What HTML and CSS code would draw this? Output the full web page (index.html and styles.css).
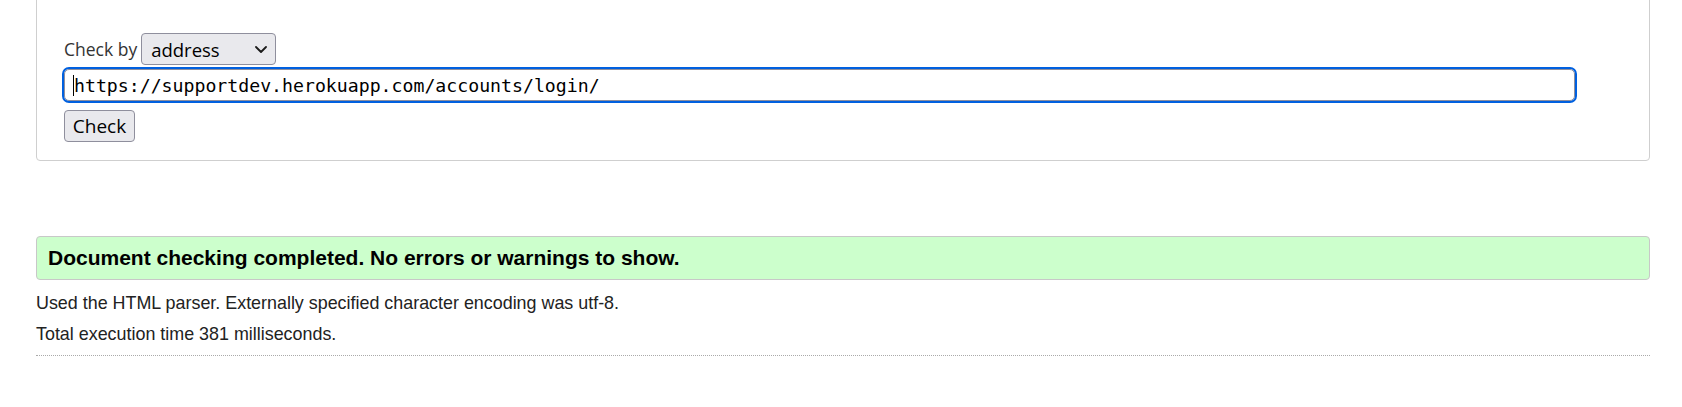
FILE: index.html
```html
<!DOCTYPE html>
<html lang="en">
<head>
<meta charset="utf-8">
<title>Nu Html Checker</title>
<link rel="stylesheet" href="styles.css">
</head>
<body>
<div class="page">
  <form class="checker">
    <div class="row">
      <label class="by-label" for="docselect">Check by</label>
      <span class="select-wrap">
        <select id="docselect" class="doc-select">
          <option>address</option>
        </select>
        <svg class="chevron" width="12" height="7" viewBox="0 0 12 7"><path d="M1 1 L6 6 L11 1" fill="none" stroke="#1b1b1b" stroke-width="1.8" stroke-linecap="round" stroke-linejoin="round"/></svg>
      </span>
    </div>
    <div class="url-wrap">
      <input class="url" type="url" value="https://supportdev.herokuapp.com/accounts/login/">
      <span class="caret"></span>
    </div>
    <button class="submit" type="button">Check</button>
  </form>

  <p class="success">Document checking completed. No errors or warnings to show.</p>
  <p class="details first">Used the HTML parser. Externally specified character encoding was utf-8.</p>
  <p class="details">Total execution time 381 milliseconds.</p>
  <hr class="sep">
</div>
</body>
</html>
```

FILE: styles.css
```css
html, body {
  margin: 0;
  background: #fff;
}
body {
  font-family: "Liberation Sans", Arial, sans-serif;
  color: #222;
}
.page {
  padding: 0 32px 0 36px;
}
.checker {
  margin: -20px 0 0 0;
  border: 1px solid #cfcfcf;
  border-radius: 4px;
  padding: 52px 0 18px 27px;
  display: flex;
  flex-direction: column;
  align-items: flex-start;
}
.row {
  display: flex;
  align-items: center;
  gap: 4px;
  height: 32px;
}
.by-label {
  font-family: "Open Sans", "Noto Sans", sans-serif;
  font-size: 17.5px;
  color: #333;
}
.select-wrap {
  position: relative;
  display: inline-flex;
}
.doc-select {
  -webkit-appearance: none;
  appearance: none;
  box-sizing: border-box;
  width: 135px;
  height: 32px;
  margin: 0;
  padding: 0 0 0 9px;
  border: 1px solid #8f8f9d;
  border-radius: 4px;
  background: #e9e9ed;
  color: #000;
  font-family: "Open Sans", "Noto Sans", sans-serif;
  font-size: 18.5px;
}
.chevron {
  position: absolute;
  left: 114px;
  top: 13px;
  pointer-events: none;
}
.url-wrap {
  position: relative;
  margin-top: 4px;
  width: 1511px;
}
.url {
  display: block;
  box-sizing: border-box;
  width: 100%;
  height: 32px;
  margin: 0;
  padding: 0 8px 0 9px;
  border: 1px solid #8f8f9d;
  border-radius: 5px;
  outline: 2px solid #0060df;
  outline-offset: 0;
  background: #fff;
  color: #000;
  font-family: "DejaVu Sans Mono", monospace;
  font-size: 18.2px;
}
.caret {
  position: absolute;
  left: 9px;
  top: 6px;
  width: 1px;
  height: 21px;
  background: #000;
}
.submit {
  box-sizing: border-box;
  margin-top: 9px;
  width: 71px;
  height: 32px;
  padding: 0;
  border: 1px solid #8f8f9d;
  border-radius: 4px;
  background: #e9e9ed;
  color: #000;
  font-family: "Open Sans", "Noto Sans", sans-serif;
  font-size: 19px;
}
.success {
  margin: 75px 0 0 0;
  border: 1px solid #c8c8c8;
  border-radius: 4px;
  background: #ccffcc;
  padding: 0 11px;
  line-height: 42px;
  font-size: 21px;
  font-weight: bold;
  color: #000;
}
.details {
  margin: 0;
  font-size: 17.9px;
  line-height: 31px;
  color: #222;
}
.details.first {
  margin-top: 8px;
}
.sep {
  margin: 5px 0 0 0;
  border: 0;
  border-top: 1px dotted #aaa;
  height: 0;
}
```
